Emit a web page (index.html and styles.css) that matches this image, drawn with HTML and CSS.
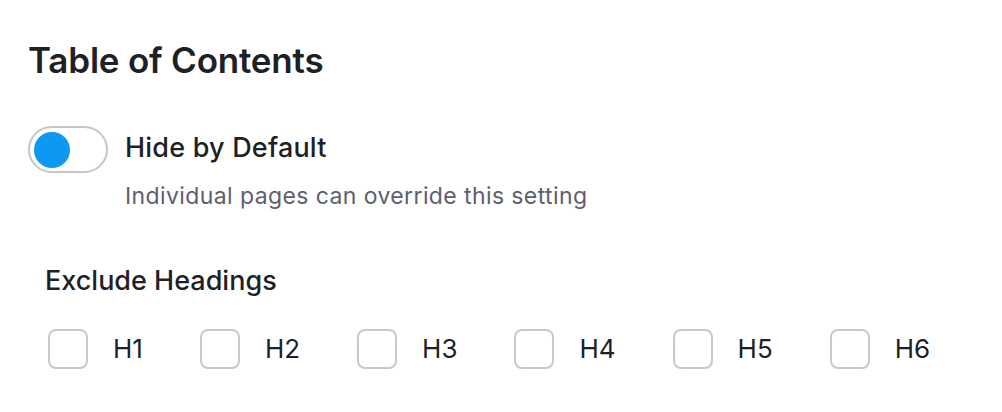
FILE: index.html
```html
<!DOCTYPE html>
<html lang="en">
  <head>
    <meta charset="UTF-8" />
    <meta name="viewport" content="width=device-width, initial-scale=1.0" />
    <title>Table of Contents</title>
    <link rel="stylesheet" href="styles.css">
  </head>
  <body>
    <div class="panel">
      <h2 class="panel-title">Table of Contents</h2>

      <div class="setting">
        <label class="switch">
          <input type="checkbox" />
          <span class="knob"></span>
        </label>
        <div class="setting-text">
          <div class="setting-label">Hide by Default</div>
          <div class="setting-hint">Individual pages can override this setting</div>
        </div>
      </div>

      <div class="exclude">
        <div class="exclude-title">Exclude Headings</div>
        <div class="heading-list">
          <label class="heading-item"><span class="box"></span>H1</label>
          <label class="heading-item"><span class="box"></span>H2</label>
          <label class="heading-item"><span class="box"></span>H3</label>
          <label class="heading-item"><span class="box"></span>H4</label>
          <label class="heading-item"><span class="box"></span>H5</label>
          <label class="heading-item"><span class="box"></span>H6</label>
        </div>
      </div>
    </div>
  </body>
</html>
```

FILE: styles.css
```css
body {
  font-family: Inter, "Noto Sans", sans-serif;
  margin: 0;
  padding: 0;
  background: #fff;
  color: #1f1f26;
}
.panel {
  padding: 36px 28px;
}
.panel-title {
  font-size: 35px;
  font-weight: 600;
  margin: 0 0 42px 0;
  line-height: 48px;
  letter-spacing: -0.2px;
}
.setting {
  display: flex;
  gap: 17px;
}
.switch {
  position: relative;
  display: block;
  width: 80px;
  height: 47px;
  border: 2px solid #c5c5cc;
  border-radius: 24px;
  box-sizing: border-box;
  background: #fff;
  cursor: pointer;
}
.switch input {
  display: none;
}
.knob {
  position: absolute;
  left: 4px;
  top: 4px;
  width: 36px;
  height: 36px;
  border-radius: 50%;
  background: #0d99f2;
}
.setting-label {
  font-size: 27px;
  font-weight: 500;
  line-height: 44px;
  letter-spacing: 0.2px;
}
.setting-hint {
  font-size: 23px;
  color: #5e5e6e;
  line-height: 32px;
  margin-top: 10px;
  letter-spacing: 0.4px;
}
.exclude {
  padding-left: 17px;
  margin-top: 53px;
}
.exclude-title {
  font-size: 27px;
  font-weight: 500;
  line-height: 32px;
}
.heading-list {
  display: flex;
  gap: 57px;
  margin-top: 32px;
  padding-left: 3px;
}
.heading-item {
  display: flex;
  align-items: center;
  gap: 25px;
  font-size: 26px;
  line-height: 40px;
}
.box {
  width: 40px;
  height: 40px;
  border: 2px solid #c8c8d0;
  border-radius: 8px;
  box-sizing: border-box;
}
```
